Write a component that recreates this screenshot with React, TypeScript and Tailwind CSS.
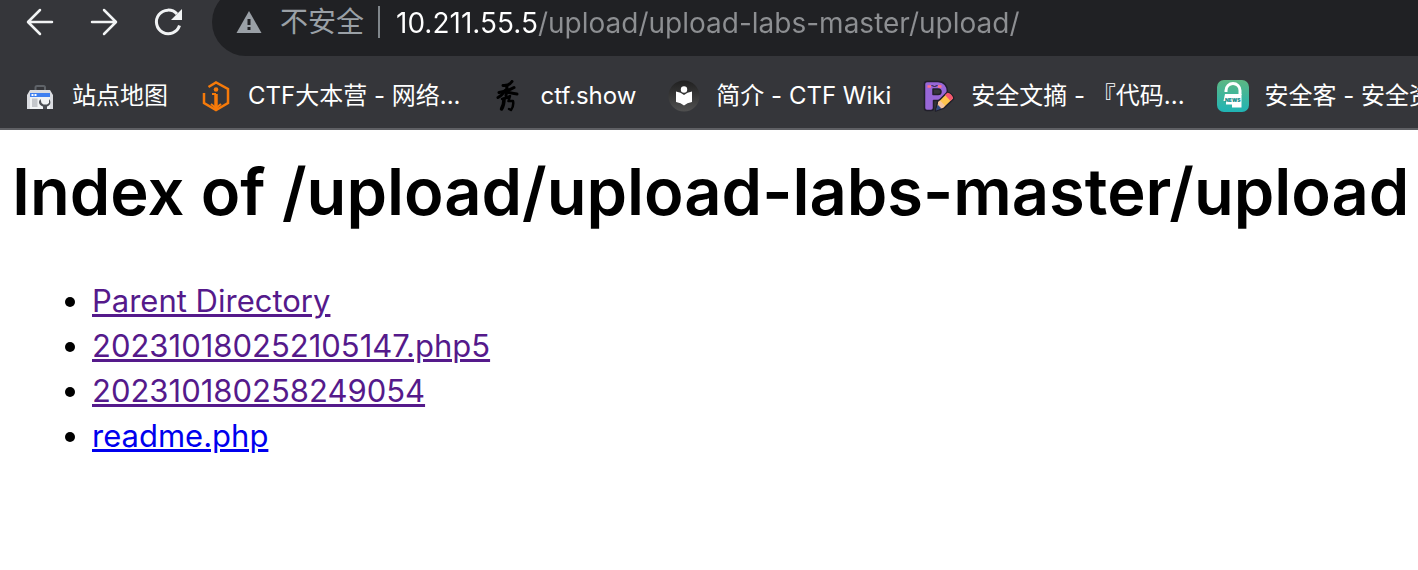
import type { ReactNode } from 'react';

function ArrowLeft() {
  return (
    <svg viewBox="0 0 32 32" className="size-8" fill="none" stroke="#f1f3f4" strokeWidth="2.5" strokeLinecap="round" strokeLinejoin="round">
      <path d="M28 16H4.5M16 4 4 16l12 12" />
    </svg>
  );
}

function ArrowRight() {
  return (
    <svg viewBox="0 0 32 32" className="size-8" fill="none" stroke="#f1f3f4" strokeWidth="2.5" strokeLinecap="round" strokeLinejoin="round">
      <path d="M4 16h23.5M16 4l12 12-12 12" />
    </svg>
  );
}

function Reload() {
  return (
    <svg viewBox="0 0 32 32" className="size-8" fill="none">
      <path d="M27.5 19.500A11.800 11.800 0 1 1 25 8" stroke="#f1f3f4" strokeWidth="3" />
      <path d="M30 3v11H19z" fill="#f1f3f4" />
    </svg>
  );
}

function Warning() {
  return (
    <svg viewBox="0 0 26 22" className="h-[22px] w-[26px] shrink-0">
      <path d="M13 0 25.500 22H.5z" fill="#9aa0a6" />
      <path d="M11.500 8h3v6h-3zM11.500 16h3v3h-3z" fill="#202124" />
    </svg>
  );
}

function ToolboxIcon() {
  return (
    <svg viewBox="0 0 32 32" className="size-8">
      <path d="M11.500 11V7.500Q11.500 6 13 6h6.500Q21 6 21 7.500V11" fill="none" stroke="#5f6368" strokeWidth="2" />
      <path d="M6 10h20l3 5v14H3V15z" fill="#dadce0" />
      <path d="M6 13h20v4H6z" fill="#3f80f0" />
      <path d="M7.500 14h2v2h-2zM10.500 14h2v2h-2z" fill="#fff" />
      <path d="M6 17h20v12H6z" fill="#f1f3f4" />
      <path d="M8 18.500h5.500V27H8z" fill="#c4c7cb" />
      <path d="M16.500 19c-3 3-1 6.500 2.500 7.500V29h4v-2.500c3.500-1 4.500-4.500 2-7.500v4l-2 1.500h-3.500L17.500 23z" fill="#4b4e53" />
    </svg>
  );
}

function OrangeHexIcon() {
  return (
    <svg viewBox="0 0 32 32" className="size-8" fill="none" stroke="#f57a0a" strokeWidth="2.5">
      <path d="M8.500 7 16 2.500l12 6.500v14L16 30 4 23V13" />
      <path d="M16 14v15" strokeWidth="3.5" />
      <path d="M12 14h4M11 24l5 4 5-4" strokeWidth="2" />
      <circle cx="16" cy="9.500" r="2.300" fill="#f57a0a" stroke="none" />
    </svg>
  );
}

function BrushIcon() {
  return (
    <svg viewBox="0 0 32 32" className="size-8" fill="none" stroke="#000" strokeLinecap="round" strokeLinejoin="round">
      <path d="M11 5.500q6 .5 9-4" strokeWidth="3" />
      <path d="M7 12.500q8-1 15-5M15 5.500 14 16" strokeWidth="3" />
      <path d="M13 10.500q-3 5-7 7M15 12q5 1.500 10 2" strokeWidth="3" />
      <path d="M10 19q5-.5 8-3l-1.500 5H21q1 5-2 9l-2-1" strokeWidth="2.500" />
      <path d="M12 19q0 6-2.500 10" strokeWidth="3.500" />
    </svg>
  );
}

function WikiIcon() {
  return (
    <svg viewBox="0 0 32 32" className="size-8">
      <defs>
        <linearGradient id="wiki" x1="0" y1="0" x2="0" y2="1">
          <stop offset="0" stopColor="#202020" />
          <stop offset="1" stopColor="#505050" />
        </linearGradient>
      </defs>
      <circle cx="16" cy="16" r="15.500" fill="url(#wiki)" />
      <circle cx="16" cy="9.500" r="3.200" fill="#fff" />
      <path d="M8 11.500q5 .5 8 3.500 3-3 8-3.500V22q-5 .5-8 3.500-3-3-8-3.500z" fill="#fff" />
    </svg>
  );
}

function PencilIcon() {
  return (
    <svg viewBox="0 0 32 32" className="size-8" strokeLinejoin="round">
      <path d="M4 1.500h11c12.500 0 12.500 19 0 19h-4.500V28q0 2.500-2.500 2.500H4Q1.500 30.500 1.500 28V4Q1.500 1.500 4 1.500z" fill="#9867d8" stroke="#211f2b" strokeWidth="1.500" />
      <path d="M10 9h5c4 0 4 5.500 0 5.500h-5z" fill="#35363a" stroke="#211f2b" strokeWidth="1.500" />
      <path d="M4.500 6.500h3.500M15 6.500h3.500" stroke="#ff7184" strokeWidth="2.500" />
      <path d="M8.500 5.500q3 2 6 0" fill="none" stroke="#211f2b" />
      <path d="m12.500 31 2-9L24 12.500q2-.5 4.500 2t2 4.500L21 28z" fill="#ffc44d" stroke="#211f2b" strokeWidth="1.500" />
      <path d="m22 15 2.500-2.300q1.500-.2 3.500 1.800t1.800 4l-2.300 2.500z" fill="#f65770" />
      <path d="m15 22 2-1.500 5 5-2 2.500-4.500 1z" fill="#f7c5a0" />
      <path d="m14.500 24.500 4 4-5.500 2z" fill="#304a80" />
    </svg>
  );
}

function NewsIcon() {
  return (
    <svg viewBox="0 0 32 32" className="size-8">
      <defs>
        <linearGradient id="news" x1="0" y1="0" x2="0" y2="1">
          <stop offset="0" stopColor="#5db783" />
          <stop offset="1" stopColor="#20b4b5" />
        </linearGradient>
      </defs>
      <rect width="32" height="32" rx="7" fill="url(#news)" />
      <path d="M9 12v-1.500a7 7 0 0 1 14 0V15" fill="none" stroke="#fff" strokeWidth="3" />
      <path d="M8 14h16.500v13.500H15v-3H9V21H6.500z" fill="#fff" />
      <text x="8" y="21.500" fontSize="5" fontWeight="900" fontFamily="Inter, sans-serif" fill="#168c88">NEWS</text>
    </svg>
  );
}

const bookmarks: { label: string; icon: ReactNode }[] = [
  { label: '站点地图', icon: <ToolboxIcon /> },
  { label: 'CTF大本营 - 网络...', icon: <OrangeHexIcon /> },
  { label: 'ctf.show', icon: <BrushIcon /> },
  { label: '简介 - CTF Wiki', icon: <WikiIcon /> },
  { label: '安全文摘 - 『代码...', icon: <PencilIcon /> },
  { label: '安全客 - 安全资', icon: <NewsIcon /> },
];

const files = [
  { name: 'Parent Directory', visited: true },
  { name: '202310180252105147.php5', visited: true },
  { name: '202310180258249054', visited: true },
  { name: 'readme.php', visited: false },
];

export default function App() {
  return (
    <div className="min-h-screen overflow-x-hidden bg-white font-['Inter','Noto_Sans_CJK_SC',sans-serif] text-black">
      <header className="overflow-hidden border-b-2 border-[#5f6064] bg-[#35363a]">
        <div className="-mt-3 flex h-[68px] items-center">
          <nav aria-label="导航" className="flex w-[212px] shrink-0 gap-8 pl-6">
            <button type="button" aria-label="后退"><ArrowLeft /></button>
            <button type="button" aria-label="前进"><ArrowRight /></button>
            <button type="button" aria-label="重新加载"><Reload /></button>
          </nav>
          <div className="flex h-full min-w-0 flex-1 items-center rounded-l-full bg-[#202124] pl-6 text-[28px]">
            <Warning />
            <span className="ml-[18px] shrink-0 text-[#9aa0a6]">不安全</span>
            <span className="mr-4 ml-3.5 h-8 w-0.5 shrink-0 bg-[#80868b]" />
            <input
              type="text"
              aria-label="地址"
              defaultValue="10.211.55.5/upload/upload-labs-master/upload/"
              className="min-w-0 flex-1 bg-linear-to-r from-white from-[142px] to-[#8d8f92] to-[142px] bg-clip-text pt-0.5 text-transparent outline-none"
            />
          </div>
        </div>
        <nav aria-label="书签" className="flex h-[72px] items-center gap-8 pt-2 pl-6 text-[24px] whitespace-nowrap text-white">
          {bookmarks.map((b) => (
            <a key={b.label} href="#" className="flex shrink-0 items-center gap-4">
              {b.icon}
              <span>{b.label}</span>
            </a>
          ))}
        </nav>
      </header>
      <main className="px-3 pt-5">
        <h1 className="text-[65px] leading-[84px] font-semibold whitespace-nowrap">Index of /upload/upload-labs-master/upload</h1>
        <ul className="mt-11 list-disc pl-20 text-[31px] leading-[45px]">
          {files.map((f) => (
            <li key={f.name}>
              <a href="#" className={f.visited ? 'text-[#551a8b] underline' : 'text-[#0000ee] underline'}>{f.name}</a>
            </li>
          ))}
        </ul>
      </main>
    </div>
  );
}
